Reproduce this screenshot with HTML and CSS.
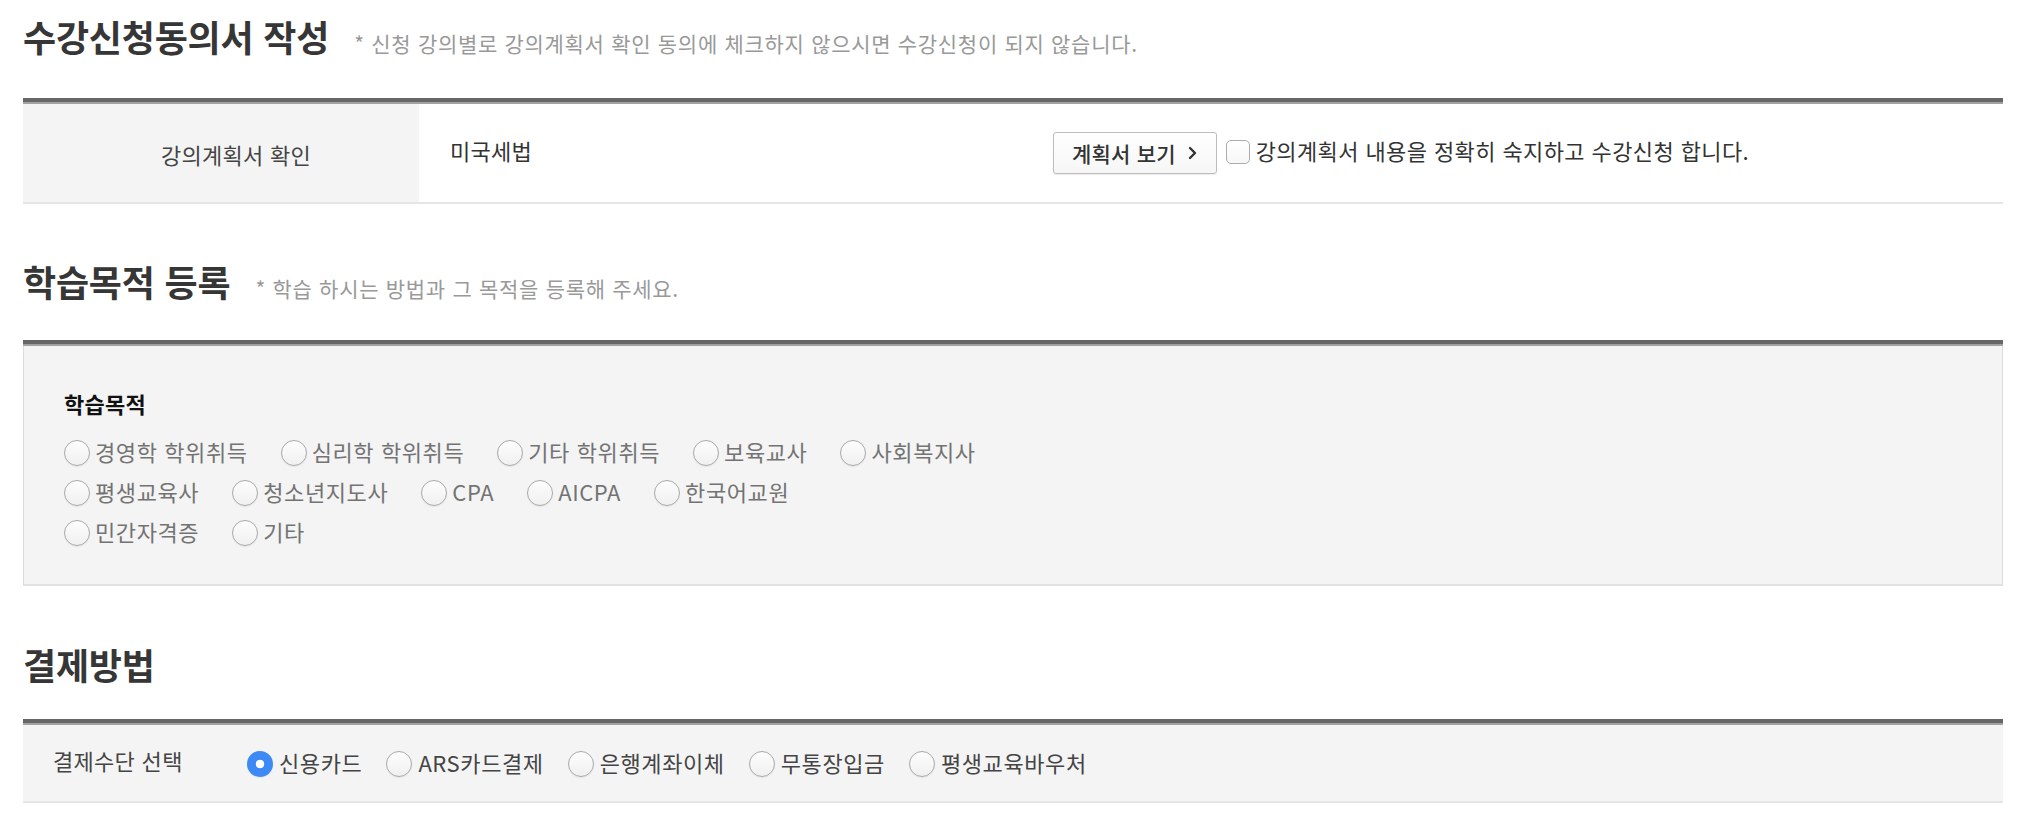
FILE: index.html
```html
<!DOCTYPE html>
<html lang="ko">
<head>
<meta charset="utf-8">
<title>수강신청</title>
<link rel="stylesheet" href="styles.css">
</head>
<body>
<div class="page">
  <section class="sec sec-first">
    <div class="sec-head">
      <h2 class="sec-title">수강신청동의서 작성</h2>
      <p class="sec-note">* 신청 강의별로 강의계획서 확인 동의에 체크하지 않으시면 수강신청이 되지 않습니다.</p>
    </div>
    <div class="board">
      <div class="board-in">
        <div class="row row-plan">
          <div class="th th-plan">강의계획서 확인</div>
          <div class="td td-plan">
            <span class="subject">미국세법</span>
            <button type="button" class="btn-plan">계획서 보기
              <svg class="chev" width="9" height="14" viewBox="0 0 9 14"><path d="M2 2 L7 7 L2 12" fill="none" stroke="#333" stroke-width="2.4" stroke-linecap="round" stroke-linejoin="round"/></svg>
            </button>
            <label class="agree"><input type="checkbox" class="chk"><span>강의계획서 내용을 정확히 숙지하고 수강신청 합니다.</span></label>
          </div>
        </div>
      </div>
    </div>
  </section>

  <section class="sec">
    <div class="sec-head">
      <h2 class="sec-title">학습목적 등록</h2>
      <p class="sec-note">* 학습 하시는 방법과 그 목적을 등록해 주세요.</p>
    </div>
    <div class="board">
      <div class="board-in">
        <div class="purpose-box">
          <h3 class="purpose-title">학습목적</h3>
          <div class="opt-line">
            <label class="opt"><input type="radio" name="purpose" class="rad"><span>경영학 학위취득</span></label>
            <label class="opt"><input type="radio" name="purpose" class="rad"><span>심리학 학위취득</span></label>
            <label class="opt"><input type="radio" name="purpose" class="rad"><span>기타 학위취득</span></label>
            <label class="opt"><input type="radio" name="purpose" class="rad"><span>보육교사</span></label>
            <label class="opt"><input type="radio" name="purpose" class="rad"><span>사회복지사</span></label>
          </div>
          <div class="opt-line">
            <label class="opt"><input type="radio" name="purpose" class="rad"><span>평생교육사</span></label>
            <label class="opt"><input type="radio" name="purpose" class="rad"><span>청소년지도사</span></label>
            <label class="opt"><input type="radio" name="purpose" class="rad"><span>CPA</span></label>
            <label class="opt"><input type="radio" name="purpose" class="rad"><span>AICPA</span></label>
            <label class="opt"><input type="radio" name="purpose" class="rad"><span>한국어교원</span></label>
          </div>
          <div class="opt-line">
            <label class="opt"><input type="radio" name="purpose" class="rad"><span>민간자격증</span></label>
            <label class="opt"><input type="radio" name="purpose" class="rad"><span>기타</span></label>
          </div>
        </div>
      </div>
    </div>
  </section>

  <section class="sec sec-last">
    <div class="sec-head">
      <h2 class="sec-title">결제방법</h2>
    </div>
    <div class="board">
      <div class="board-in">
        <div class="row row-pay">
          <div class="th th-pay">결제수단 선택</div>
          <div class="td td-pay">
            <label class="opt opt-pay"><input type="radio" name="pay" class="rad" checked><span>신용카드</span></label>
            <label class="opt opt-pay"><input type="radio" name="pay" class="rad"><span>ARS카드결제</span></label>
            <label class="opt opt-pay"><input type="radio" name="pay" class="rad"><span>은행계좌이체</span></label>
            <label class="opt opt-pay"><input type="radio" name="pay" class="rad"><span>무통장입금</span></label>
            <label class="opt opt-pay"><input type="radio" name="pay" class="rad"><span>평생교육바우처</span></label>
          </div>
        </div>
      </div>
    </div>
  </section>
</div>
</body>
</html>
```

FILE: styles.css
```css
* { box-sizing: border-box; }
html, body { margin: 0; padding: 0; background: #fff; }
body {
  font-family: "Noto Sans CJK KR", "Noto Sans", sans-serif;
  font-size: 22px;
  letter-spacing: 0.3px;
  color: #333;
}
.page {
  padding: 16px 17px 0 23px;
}
.sec { margin-top: 57px; }
.sec-first { margin-top: 0; }
.sec-last { margin-top: 58px; }

.sec-head {
  display: flex;
  align-items: baseline;
  height: 40px;
  margin-bottom: 39px;
}
.sec-first .sec-head { margin-bottom: 42px; }
.sec-last .sec-head { margin-bottom: 35px; }
.sec-title {
  margin: 0;
  font-size: 36px;
  line-height: 40px;
  font-weight: 700;
  color: #363636;
  letter-spacing: -0.2px;
}
.sec-note {
  margin: 0 0 0 25px;
  font-size: 21px;
  color: #999;
  letter-spacing: 0.7px;
}

.board { border-top: 4px solid #666; }
.board-in { border-top: 2px solid #a2a2a2; }

.row {
  display: flex;
  border-bottom: 2px solid #e6e6e6;
}
.row-plan { height: 100px; }
.th {
  display: flex;
  align-items: center;
  color: #444;
}
.th-plan {
  width: 396px;
  background: #f4f4f4;
  justify-content: center;
  padding-left: 30px;
  padding-top: 2px;
}
.td {
  display: flex;
  align-items: center;
  flex: 1;
}
.td-plan { padding-left: 31px; padding-bottom: 6px; }
.subject { width: 603px; color: #333; }

.btn-plan {
  display: flex;
  align-items: center;
  gap: 12px;
  height: 42px;
  padding: 0 19px 0 18px;
  font-family: inherit;
  font-size: 21px;
  font-weight: 500;
  letter-spacing: 0.2px;
  color: #333;
  background: linear-gradient(#fff, #f6f6f6);
  border: 1px solid #bdbdbd;
  border-radius: 3px;
  box-shadow: 0 1px 1px rgba(0,0,0,0.08);
  margin-top: 6px;
}
.chev { display: block; }

.agree {
  display: flex;
  align-items: center;
  margin-left: 9px;
  color: #333;
  letter-spacing: 0.4px;
}
.chk {
  appearance: none;
  -webkit-appearance: none;
  width: 24px;
  height: 24px;
  margin: 4px 6px 0 0;
  border: 1px solid #adadad;
  border-radius: 5px;
  background: linear-gradient(#fff, #f7f7f7);
}

.purpose-box {
  background: #f4f4f4;
  border-left: 1px solid #dcdcdc;
  border-right: 1px solid #dcdcdc;
  border-bottom: 2px solid #e2e2e2;
  padding: 41px 40px 33px 40px;
}
.purpose-title {
  margin: 0 0 12px 0;
  font-size: 22px;
  line-height: 32px;
  font-weight: 700;
  color: #111;
}
.opt-line {
  display: flex;
  align-items: center;
  height: 40px;
}
.opt {
  display: flex;
  align-items: center;
  margin-right: 33px;
  color: #737373;
  letter-spacing: 0.6px;
}
.rad {
  appearance: none;
  -webkit-appearance: none;
  width: 26px;
  height: 26px;
  margin: 3px 5px 0 0;
  border: 1px solid #a9a9a9;
  border-radius: 50%;
  background: linear-gradient(#fdfdfd, #f0f0f0);
  box-shadow: 0 1px 1px rgba(0,0,0,0.06);
  flex: none;
}
.rad:checked {
  border: none;
  background: radial-gradient(circle, #fff 0 4px, #3d8af7 4.6px);
}

.row-pay {
  height: 78px;
  background: #f4f4f4;
}
.th-pay {
  width: 224px;
  padding-left: 30px;
  padding-bottom: 6px;
}
.td-pay { padding-bottom: 2px; }
.opt-pay { margin-right: 24px; color: #444; }
.opt-pay .rad { margin-right: 6px; }
```
